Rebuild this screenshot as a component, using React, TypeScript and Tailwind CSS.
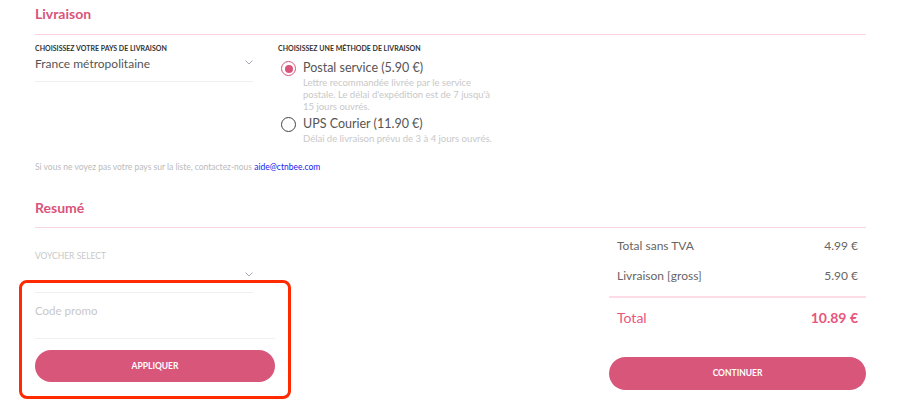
import React from "react";

const Chevron = () => (
  <svg width="8" height="5" viewBox="0 0 8 5" fill="none" className="text-gray-400">
    <path d="M0.5 0.5l3.5 3.5 3.5-3.5" stroke="currentColor" strokeWidth="0.9" />
  </svg>
);

function Radio({ checked }: { checked: boolean }) {
  return checked ? (
    <span className="mt-[2px] flex h-[15px] w-[15px] shrink-0 items-center justify-center rounded-full border-[1.5px] border-[#d9547b]">
      <span className="h-[8px] w-[8px] rounded-full bg-[#d9547b]" />
    </span>
  ) : (
    <span className="mt-[2px] h-[15px] w-[15px] shrink-0 rounded-full border-[1.5px] border-[#444]" />
  );
}

export default function App() {
  return (
    <div className="relative h-[415px] w-[900px] bg-white pl-[35px] text-[#555]" style={{ fontFamily: "Lato, 'Noto Sans', sans-serif" }}>
      <h2 className="pt-[5px] text-[14px] font-bold leading-[18px] text-[#d9547b]">Livraison</h2>
      <div className="mt-[11px] h-px w-[831px] bg-[#ffd3e2]" />

      <div className="mt-[8px] flex">
        <div className="w-[218px]">
          <div className="text-[7px] font-bold uppercase leading-[10px] text-[#333]">Choisissez votre pays de livraison</div>
          <div className="flex h-[29px] items-start justify-between border-b border-[#eee] pt-[3px]">
            <span className="text-[12px] leading-[16px] text-[#555]">France métropolitaine</span>
            <span className="pt-[4px]"><Chevron /></span>
          </div>
        </div>
        <div className="ml-[25px]">
          <div className="text-[7px] font-bold uppercase leading-[10px] text-[#333]">Choisissez une méthode de livraison</div>
          <div className="mt-[6px] flex gap-[7px] pl-[3px]">
            <Radio checked />
            <div>
              <div className="text-[12.5px] leading-[18px] text-[#555]">Postal service (5.90 €)</div>
              <p className="w-[195px] text-[9.5px] leading-[12px] text-[#c8c8c8]">
                Lettre recommandée livrée par le service postale. Le délai d'expédition est de 7 jusqu'à 15 jours ouvrés.
              </p>
            </div>
          </div>
          <div className="mt-[2px] flex gap-[7px] pl-[3px]">
            <Radio checked={false} />
            <div>
              <div className="text-[12.5px] leading-[18px] text-[#555]">UPS Courier (11.90 €)</div>
              <p className="text-[9.5px] leading-[12px] text-[#c8c8c8]">Délai de livraison prévu de 3 à 4 jours ouvrés.</p>
            </div>
          </div>
        </div>
      </div>

      <p className="mt-[16px] text-[8.5px] leading-[12px] text-[#bbb]">
        Si vous ne voyez pas votre pays sur la liste, contactez-nous <span className="text-[#2020ee]">aide@ctnbee.com</span>
      </p>

      <h2 className="mt-[26px] text-[14px] font-bold leading-[18px] text-[#d9547b]">Resumé</h2>
      <div className="mt-[10px] h-px w-[831px] bg-[#f5d5df]" />

      <div className="flex">
        <div className="w-[240px]">
          <div className="mt-[22px] text-[8.5px] uppercase leading-[12px] text-[#c8c8c8]">Voycher select</div>
          <div className="flex h-[31px] w-[218px] items-start justify-end border-b border-[#f0f0f0] pt-[10px]">
            <Chevron />
          </div>
          <div className="h-[46px] border-b border-[#f0f0f0] pt-[11px] text-[11.5px] leading-[14px] text-[#c8c8c8]">Code promo</div>
          <button className="mt-[11px] h-[32px] w-[240px] rounded-full bg-[#d9567b] text-[8.5px] font-bold uppercase text-white">Appliquer</button>
        </div>

        <div className="ml-[334px] w-[257px]">
          <div className="mt-[8px] flex h-[20px] items-center justify-between px-[8px] text-[12px] text-[#666]">
            <span>Total sans TVA</span>
            <span>4.99 €</span>
          </div>
          <div className="mt-[10px] flex h-[20px] items-center justify-between px-[8px] text-[12px] text-[#666]">
            <span>Livraison [gross]</span>
            <span>5.90 €</span>
          </div>
          <div className="mt-[10px] h-[1.5px] bg-[#ffdbe6]" />
          <div className="mt-[10px] flex h-[20px] items-center justify-between px-[8px] text-[14px] text-[#e8557d]">
            <span>Total</span>
            <span className="font-bold">10.89 €</span>
          </div>
          <button className="mt-[29px] h-[33px] w-full rounded-full bg-[#d9567b] text-[8.5px] font-bold uppercase text-white">Continuer</button>
        </div>
      </div>

      <div className="pointer-events-none absolute left-[19px] top-[280px] h-[119px] w-[272px] rounded-[8px] border-[3px] border-[#ff2a00]" />
    </div>
  );
}
